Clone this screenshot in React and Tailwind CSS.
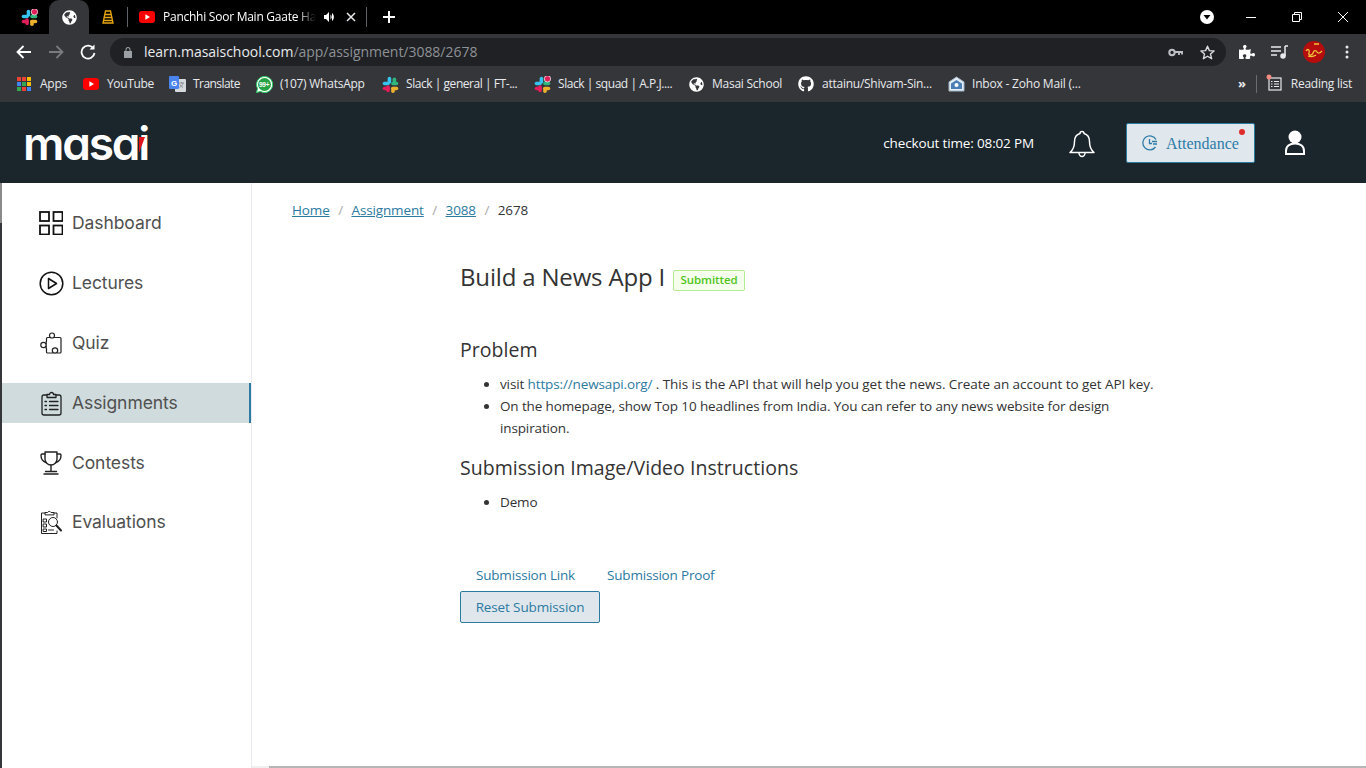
import React from "react";
import { FaGithub, FaGlobeAmericas, FaPuzzlePiece } from "react-icons/fa";

const ui = "font-['Open_Sans','Noto_Sans',sans-serif]";

function Slack({ badge }) {
  return (
    <svg width="17" height="17" viewBox="0 0 24 24" className="shrink-0">
      <rect x="8" y="1" width="5" height="10" rx="2.5" fill="#36c5f0" />
      <rect x="1" y="8" width="10" height="5" rx="2.5" fill="#36c5f0" />
      <rect x="15" y="2" width="5" height="10" rx="2.5" fill="#2eb67d" />
      <rect x="13" y="8" width="10" height="5" rx="2.5" fill="#2eb67d" />
      <rect x="13" y="15" width="10" height="5" rx="2.5" fill="#ecb22e" />
      <rect x="13" y="15" width="5" height="9" rx="2.5" fill="#ecb22e" />
      <rect x="6" y="13" width="5" height="10" rx="2.5" fill="#e01e5a" />
      <rect x="1" y="15" width="10" height="5" rx="2.5" fill="#e01e5a" />
      {badge && <circle cx="19" cy="4" r="4.5" fill={badge} stroke="#fff" strokeWidth="1" />}
    </svg>
  );
}

function Yt({ w = 16 }) {
  return (
    <svg width={w} height="12" viewBox="0 0 16 12" className="shrink-0">
      <rect width="16" height="12" rx="3" fill="#f00" />
      <path d="M6.4 3.2 11 6l-4.6 2.8z" fill="#fff" />
    </svg>
  );
}

function Bookmark({ icon, label, className = "" }) {
  return (
    <div className={`flex shrink-0 items-center whitespace-nowrap ${className}`}>
      {icon}
      <span>{label}</span>
    </div>
  );
}

const Apps = () => (
  <svg width="14" height="14" viewBox="0 0 14 14" className="shrink-0">
    {[["#ea4335", "#ea4335", "#fbbc04"], ["#4285f4", "#34a853", "#fbbc04"], ["#34a853", "#ea4335", "#4285f4"]].map((r, y) =>
      r.map((c, x) => <rect key={x} x={x * 5} y={y * 5} width="4" height="4" fill={c} />)
    )}
  </svg>
);

const Translate = () => (
  <svg width="17" height="17" viewBox="0 0 17 17" className="shrink-0">
    <rect x="6" y="3" width="11" height="13" rx="1" fill="#d5d8dc" />
    <path d="M10 7h5M12.500 6v1M14 7c-.5 2-2 3.500-3.500 4.500M11 8.500c.5 1 1.500 2 3 3" stroke="#8a8f96" fill="none" />
    <rect x="0" y="0" width="10" height="13" rx="1" fill="#4a83ec" />
    <text x="2" y="10" fontSize="8" fontWeight="700" fill="#fff" fontFamily="Liberation Sans">G</text>
  </svg>
);

const WhatsApp = () => (
  <svg width="17" height="17" viewBox="0 0 17 17" className="shrink-0">
    <path d="M8.5 .5a8 8 0 0 0-6.9 12L.5 16.5l4.100-1.100A8 8 0 1 0 8.500 .5z" fill="#fff" stroke="#25d366" strokeWidth="1" />
    <circle cx="8.500" cy="8.500" r="6.500" fill="#25a244" />
    <text x="3" y="11" fontSize="6.500" fontWeight="700" fill="#fff" fontFamily="Liberation Sans">99+</text>
  </svg>
);

const Zoho = () => (
  <svg width="17" height="17" viewBox="0 0 17 17" className="shrink-0" fill="none">
    <path d="M8.500 1 16 6v9H1V6z" fill="#e6edf5" stroke="#9fb5cc" />
    <path d="M3 7.500 8.500 4 14 7.500V13H3z" fill="#4a7fb5" />
    <circle cx="8.500" cy="9" r="2" fill="#fff" />
  </svg>
);

function SideItem({ icon, label, active, className = "" }) {
  return (
    <div
      className={`flex h-10 items-center pl-[36px] gap-[8px] text-[17.500px] text-[#505050] font-['Inter',sans-serif] tracking-[-0.08px] ${
        active ? "bg-[#cfdbdd] border-r-[2px] border-[#2c7aa1]" : ""
      } ${className}`}
    >
      <span className="flex w-[26px] justify-center">{icon}</span>
      <span className="mt-[1px]">{label}</span>
    </div>
  );
}

const stroke = { fill: "none", stroke: "#222", strokeWidth: 1.2, strokeLinejoin: "round", strokeLinecap: "round" };

const DashIcon = () => (
  <svg width="24" height="24" viewBox="0 0 24 24" fill="none" stroke="#111" strokeWidth="1.800">
    <rect x="1" y="1" width="9" height="9" />
    <rect x="14.500" y="1" width="9" height="9" />
    <rect x="1" y="14.500" width="9" height="9" />
    <rect x="14.500" y="14.500" width="9" height="9" />
  </svg>
);
const PlayIcon = () => (
  <svg width="25" height="25" viewBox="0 0 25 25" fill="none" stroke="#111" strokeWidth="1.500" strokeLinejoin="round">
    <circle cx="12.500" cy="12.500" r="11.300" />
    <path d="M9.500 7.500 17.500 12.500 9.500 17.500z" />
  </svg>
);
const QuizIcon = () => (
  <svg width="22" height="22" viewBox="0 0 22 22" {...stroke}>
    <path d="M6.500 9.500V6.500a1 1 0 0 1 1-1h2.500M14 5.500h6a1 1 0 0 1 1 1V20a1 1 0 0 1-1 1h-2.500M12.500 21H7.500a1 1 0 0 1-1-1v-3.500" />
    <circle cx="12" cy="3.500" r="2.500" />
    <circle cx="3.500" cy="13" r="2.700" />
    <circle cx="15" cy="18.500" r="2.700" />
    <path d="M6.200 12V9.500M6.200 14v2.500" />
  </svg>
);
const ClipIcon = () => (
  <svg width="21" height="25" viewBox="0 0 21 25" {...stroke} strokeWidth="1.300">
    <path d="M6 4H3a2 2 0 0 0-2 2v16a2 2 0 0 0 2 2h15a2 2 0 0 0 2-2V6a2 2 0 0 0-2-2h-3" />
    <path d="M6 6.500V3.500h2.500a2 2 0 0 1 4 0H15v3z" />
    <path d="M8.500 10.500H17M8.500 14.500H17M8.500 18.500H17M4 10.500h1.500M4 14.500h1.500M4 18.500h1.500" />
  </svg>
);
const TrophyIcon = () => (
  <svg width="22" height="24" viewBox="0 0 22 24" {...stroke} strokeWidth="1.400">
    <path d="M5 1h12v7a6 6 0 0 1-12 0z" />
    <path d="M5 3H2a1.500 1.500 0 0 0-1 1.500C1 8 3 10.500 6 11.500M17 3h3a1.500 1.500 0 0 1 1 1.500C21 8 19 10.500 16 11.500" />
    <path d="M11 14v6M5.500 20.500h11M4 23h14" />
  </svg>
);
const EvalIcon = () => (
  <svg width="22" height="25" viewBox="0 0 22 25" {...stroke} strokeWidth="1">
    <path d="M5 3H1.500v20.500h15.500V21M14 3h3v5" />
    <path d="M5 4.500V2.500h2.500a2 2 0 0 1 3.500 0H14v2z" />
    <path d="M3.500 9h3v3h-3zM3.500 14h3v3h-3zM3.500 19h3v2.500h-3z" />
    <circle cx="13" cy="12" r="4.500" />
    <path d="m16.500 15.500 4.500 5" strokeWidth="2" />
    <path d="M8.500 20h5" />
  </svg>
);

export default function App() {
  return (
    <div className={`flex h-[768px] w-[1366px] flex-col overflow-hidden bg-white ${ui}`}>
      {/* tab strip */}
      <div className="flex h-[34px] shrink-0 items-center bg-black text-white">
        <div className="ml-[21px]"><Slack badge="#e01e5a" /></div>
        <div className="ml-[11px] flex h-[34px] w-[40px] items-center justify-center rounded-t-[10px] bg-[#35363a]">
          <FaGlobeAmericas size={15} color="#fff" />
        </div>
        <svg width="12" height="14" viewBox="0 0 12 14" className="ml-[13px]" fill="none" stroke="#e8a710" strokeWidth="1.300">
          <path d="M3.500 1h5l2.500 12H1zM3 4.500h6M2.500 7.500h7M2 10.500h8" />
        </svg>
        <div className="ml-[13px] h-5 w-px bg-[#5f6368]" />
        <div className="ml-[11px]"><Yt /></div>
        <span className="ml-2 w-[153px] overflow-hidden whitespace-nowrap text-[12px] tracking-[-0.25px] [mask-image:linear-gradient(to_right,black_88%,transparent)]">
          Panchhi Soor Main Gaate Hain
        </span>
        <svg width="10" height="10" viewBox="0 0 10 10" className="ml-2" fill="#fff">
          <path d="M0 3h2l3-3v10L2 7H0zM6.500 2.500c1.500 1 1.500 4 0 5zM8 1c2.500 1.500 2.500 6.500 0 8z" />
        </svg>
        <svg width="10" height="10" viewBox="0 0 10 10" className="ml-[12px]" stroke="#e8eaed" strokeWidth="1.500">
          <path d="m1 1 8 8M9 1l-8 8" />
        </svg>
        <div className="ml-[10px] h-5 w-px bg-[#5f6368]" />
        <svg width="12" height="12" viewBox="0 0 12 12" className="ml-[16px]" stroke="#fff" strokeWidth="2">
          <path d="M6 0v12M0 6h12" />
        </svg>
        <div className="flex-1" />
        <svg width="14" height="14" viewBox="0 0 14 14" className="mr-[32px]">
          <circle cx="7" cy="7" r="7" fill="#fff" />
          <path d="M3.500 5h7L7 9.500z" fill="#000" />
        </svg>
        <div className="mr-[36px] h-px w-[10px] bg-white" />
        <svg width="10" height="10" viewBox="0 0 10 10" className="mr-[36px]" fill="none" stroke="#fff">
          <path d="M.5 2.500h7v7h-7zM2.500 2.500v-2h7v7h-2" />
        </svg>
        <svg width="10" height="10" viewBox="0 0 10 10" className="mr-[18px]" stroke="#fff">
          <path d="m0 0 10 10M10 0 0 10" />
        </svg>
      </div>

      {/* toolbar */}
      <div className="flex h-[34px] shrink-0 items-center bg-[#35363a] pb-[2px] pt-[4px]">
        <svg width="16" height="14" viewBox="0 0 16 14" className="ml-[16px]" fill="none" stroke="#fff" strokeWidth="1.800">
          <path d="M15 7H2M7.500 1 1.500 7l6 6" />
        </svg>
        <svg width="16" height="14" viewBox="0 0 16 14" className="ml-[16px]" fill="none" stroke="#7a7b7e" strokeWidth="1.800">
          <path d="M1 7h13M8.500 1l6 6-6 6" />
        </svg>
        <svg width="16" height="16" viewBox="0 0 16 16" className="ml-[16px]" fill="none" stroke="#fff" strokeWidth="1.800">
          <path d="M13.500 4.500A6.500 6.500 0 1 0 14.500 9" />
          <path d="M14.500 .5v5h-5" fill="#fff" stroke="none" />
        </svg>
        <div className="ml-[14px] flex h-[28px] w-[1116px] items-center rounded-full bg-[#202124]">
          <svg width="10" height="12" viewBox="0 0 10 12" className="ml-[13px]" fill="#9aa0a6">
            <path d="M1 5h8v7H1zM2.500 5V3.500a2.500 2.500 0 0 1 5 0V5H6.500V3.500a1.500 1.500 0 0 0-3 0V5z" />
          </svg>
          <span className="ml-[11px] -mt-[1px] text-[14px] text-[#e8eaed] tracking-[-0.03px]">
            learn.masaischool.com<span className="text-[#8e9297]">/app/assignment/3088/2678</span>
          </span>
          <div className="flex-1" />
          <svg width="15" height="9" viewBox="0 0 15 9" className="mr-[17px]" fill="none" stroke="#bdc1c6">
            <circle cx="4" cy="4.500" r="2.700" strokeWidth="2" />
            <path d="M7 4h8M11 4v3M14 4v2.500" strokeWidth="1.800" />
          </svg>
          <svg width="15" height="15" viewBox="0 0 24 24" className="mr-[11px]" fill="none" stroke="#dadce0" strokeWidth="2.200" strokeLinejoin="round">
            <path d="m12 2 3 7 7.500.6-5.700 4.900 1.800 7.400L12 18l-6.600 3.900 1.800-7.400L1.500 9.600 9 9z" />
          </svg>
        </div>
        <FaPuzzlePiece size={16} color="#fff" className="ml-[13px]" />
        <svg width="17" height="14" viewBox="0 0 17 14" className="ml-[16px]" fill="none" stroke="#e8eaed" strokeWidth="1.500">
          <path d="M0 2h10M0 6h10M0 10h6M14 1v10M14 1h3" />
          <circle cx="12" cy="11" r="2" fill="#e8eaed" />
        </svg>
        <svg width="22" height="22" viewBox="0 0 22 22" className="ml-[15px]" fill="none">
          <circle cx="11" cy="11" r="11" fill="#b50d0d" />
          <path d="M3 10c2-3 4-1 3 2s3 3 4 0 3-3 4-1 3 1 5-1M5 15c3 1 5 1 8-1M11 3h5" stroke="#f0c23a" strokeWidth="1.300" />
        </svg>
        <svg width="4" height="14" viewBox="0 0 4 14" className="ml-[20px]" fill="#e8eaed">
          <circle cx="2" cy="2" r="1.500" />
          <circle cx="2" cy="7" r="1.500" />
          <circle cx="2" cy="12" r="1.500" />
        </svg>
      </div>

      {/* bookmarks */}
      <div className="flex h-[32px] shrink-0 items-center bg-[#35363a] pl-[17px] text-[12px] text-[#e8eaed] tracking-[-0.25px]">
        <Bookmark icon={<Apps />} label="Apps" className="w-[66px] gap-[9px]" />
        <Bookmark icon={<Yt />} label="YouTube" className="w-[86px] gap-2 tracking-[-0.35px]" />
        <Bookmark icon={<Translate />} label="Translate" className="w-[87px] gap-[7px] tracking-[-0.55px]" />
        <Bookmark icon={<WhatsApp />} label="(107) WhatsApp" className="w-[126px] gap-[7px]" />
        <Bookmark icon={<Slack />} label="Slack | general | FT-..." className="w-[152px] gap-[7px] tracking-[-0.45px]" />
        <Bookmark icon={<Slack badge="#e01e5a" />} label="Slack | squad | A.P.J...." className="w-[155px] gap-[7px] tracking-[-0.45px]" />
        <Bookmark icon={<FaGlobeAmericas size={15} color="#fff" />} label="Masai School" className="w-[109px] gap-2" />
        <Bookmark icon={<FaGithub size={16} color="#fff" />} label="attainu/Shivam-Sin..." className="w-[150px] gap-2" />
        <Bookmark icon={<Zoho />} label="Inbox - Zoho Mail (..." className="gap-[7px] tracking-[-0.2px]" />
        <div className="flex-1" />
        <span className="text-[13px] font-bold">»</span>
        <div className="ml-[10px] h-[18px] w-px bg-[#6b6c70]" />
        <div className="ml-[11px] flex items-center gap-[9px] pr-[14px]">
          <svg width="14" height="14" viewBox="0 0 14 14" fill="none" stroke="#e8eaed" strokeWidth="1.200" overflow="visible">
            <rect x="1" y="1" width="12" height="12" />
            <path d="M3 4.500h1.500M6 4.500h5M3 7h1.500M6 7h5M3 9.500h1.500M6 9.500h5" />
            <circle cx="1" cy="0" r="2.500" fill="#f28b82" stroke="none" />
          </svg>
          <span>Reading list</span>
        </div>
      </div>
      <div className="h-[2px] shrink-0 bg-[#35363a]" />

      {/* masai header */}
      <header className="flex h-[81px] shrink-0 items-center bg-[#1a252c] pl-[23px] text-white">
        <div className="relative mt-[1px] font-['Inter',sans-serif] text-[46px] font-semibold leading-none tracking-[-2.2px] [font-feature-settings:'cv11']">
          masai
          <svg width="6" height="16" viewBox="0 0 6 16" className="absolute right-[3px] top-[17px]">
            <path d="M0 0h6L0 16z" fill="#e0141c" />
          </svg>
        </div>
        <div className="flex-1" />
        <span className="mt-[2px] text-[13.500px] tracking-[-0.15px]">checkout time: 08:02 PM</span>
        <svg width="26" height="28" viewBox="0 0 26 28" className="ml-[35px] mt-[2px]" fill="none" stroke="#fff" strokeWidth="1.500" strokeLinejoin="round">
          <path d="M13 1.500c-1.500 0-2 1-2 2-3.500 1-5.500 4-5.500 8 0 5-1 8-4.500 11h24c-3.500-3-4.500-6-4.500-11 0-4-2-7-5.500-8 0-1-.5-2-2-2z" />
          <path d="M10 23c0 2 1.500 3.500 3 3.500s3-1.500 3-3.500" />
        </svg>
        <button className="relative ml-[31px] flex h-10 w-[129px] items-center justify-center gap-2 rounded-[2px] border border-[#2b7aa1] bg-[#e0e8ee] font-['Liberation_Serif',serif] text-[16px] text-[#2d7ba6]">
          <svg width="16" height="16" viewBox="0 0 16 16" fill="none" stroke="#2d7ba6" strokeWidth="1.300">
            <path d="M14 4.500A7 7 0 1 0 13.500 12M7.500 4v4.500h2.500M10 6.500h5M11 9h4" />
          </svg>
          <span className="mt-[2px]">Attendance</span>
          <span className="absolute right-[9px] top-[5px] h-[6px] w-[6px] rounded-full bg-[#e02b2b]" />
        </button>
        <svg width="20" height="25" viewBox="0 0 20 25" className="ml-[30px] mr-[61px]" fill="none">
          <circle cx="10" cy="7" r="6.500" fill="#fff" />
          <path d="M1 24v-3c0-5 4-7.500 9-7.500s9 2.500 9 7.500v3z" stroke="#fff" strokeWidth="2" />
        </svg>
      </header>

      {/* body */}
      <div className="flex min-h-0 flex-1">
        <div className="flex w-[2px] shrink-0 flex-col bg-[#35363a]">
          <div className="h-[40px] bg-[#8a8a8a]" />
        </div>
        <aside className="flex w-[250px] shrink-0 flex-col gap-5 border-r border-[#e9ebf0] pt-5">
          <SideItem icon={<DashIcon />} label="Dashboard" />
          <SideItem icon={<PlayIcon />} label="Lectures" />
          <SideItem icon={<QuizIcon />} label="Quiz" />
          <SideItem icon={<ClipIcon />} label="Assignments" active />
          <SideItem icon={<TrophyIcon />} label="Contests" />
          <SideItem icon={<EvalIcon />} label="Evaluations" className="-mt-px" />
        </aside>
        <main className="flex min-w-0 flex-1 flex-col">
          <div className="flex-1 pt-[17px] text-[#333] text-[13.500px] tracking-[-0.13px]">
            <nav className="ml-[40px] flex h-5 items-center leading-5 text-[#2c7aa1]">
              <span className="underline">Home</span>
              <span className="mx-[8.500px] text-[#aaa]">/</span>
              <span className="underline">Assignment</span>
              <span className="mx-[8.500px] text-[#aaa]">/</span>
              <span className="underline">3088</span>
              <span className="mx-[8.500px] text-[#aaa]">/</span>
              <span className="text-[#333]">2678</span>
            </nav>
            <div className="ml-[208px] w-[710px]">
              <div className="mt-[39px] flex h-9 items-center gap-[8px]">
                <h1 className="text-[24px] font-normal leading-9 tracking-[-0.17px]">Build a News App I</h1>
                <span className="mt-[6px] flex h-[21px] w-[72px] items-center justify-center rounded-[2px] border border-[#b7eb8f] bg-[#f6ffed] text-[11.500px] font-semibold tracking-[-0.1px] text-[#52c41a]">
                  Submitted
                </span>
              </div>
              <h2 className="mt-[41px] text-[19.500px] font-medium leading-7 tracking-[0.04px]">Problem</h2>
              <ul className="mt-[9px] list-disc pl-10 leading-[22px]">
                <li>
                  visit <span className="text-[#2c7aa1]">https://newsapi.org/</span> <span className="tracking-[-0.05px]">. This is the API that will help you get the news. Create an account to get API key.</span>
                </li>
                <li>On the homepage, show Top 10 headlines from India. You can refer to any news website for design inspiration.</li>
              </ul>
              <h2 className="mt-[15px] text-[19.500px] font-medium leading-7 tracking-[0.04px]">Submission Image/Video Instructions</h2>
              <ul className="mt-[9px] list-disc pl-10 leading-[22px]">
                <li>Demo</li>
              </ul>
              <div className="mt-[51px] flex gap-[32px] pl-4 leading-[22px] tracking-[-0.19px] text-[#2c7aa1]">
                <span>Submission Link</span>
                <span>Submission Proof</span>
              </div>
              <button className="mt-[5px] block h-8 w-[140px] rounded-[2px] border border-[#2c7aa1] bg-[#dfe7ed] text-[#2c7aa1]">
                Reset Submission
              </button>
            </div>
          </div>
          <div className="h-[2px] shrink-0 bg-[#efefef] pl-[17px]">
            <div className="h-full bg-[#b5b5b5]" />
          </div>
        </main>
      </div>
    </div>
  );
}
